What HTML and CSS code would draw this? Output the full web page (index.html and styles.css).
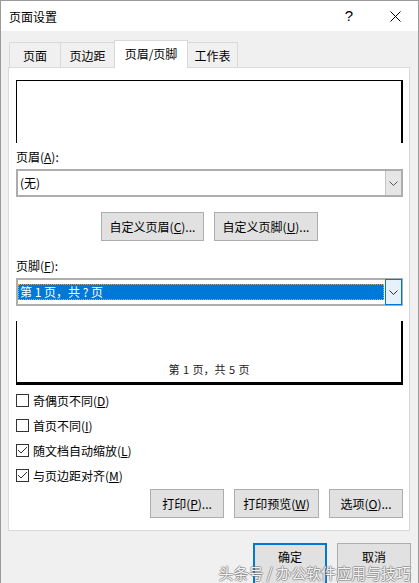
FILE: index.html
```html
<!DOCTYPE html>
<html lang="zh-CN">
<head>
<meta charset="utf-8">
<title>页面设置</title>
<link rel="stylesheet" href="styles.css">
</head>
<body>
<div class="window">
  <div class="titlebar">
    <span class="title">页面设置</span>
    <span class="caption-btn help">?</span>
    <span class="caption-btn close">
      <svg width="11" height="11" viewBox="0 0 11 11"><path d="M0.5 0.5 L10.5 10.5 M10.5 0.5 L0.5 10.5" stroke="#000" stroke-width="1" fill="none"/></svg>
    </span>
  </div>
  <div class="main">
    <div class="tabs">
      <div class="tab tab-page">页面</div>
      <div class="tab tab-margin">页边距</div>
      <div class="tab tab-active">页眉/页脚</div>
      <div class="tab tab-sheet">工作表</div>
    </div>
    <div class="panel">
      <div class="preview preview-top"></div>
      <div class="label">页眉(<u>A</u>):</div>
      <div class="combo">
        <span class="combo-value">(无)</span>
        <span class="combo-btn">
          <svg width="9" height="5" viewBox="0 0 9 5"><polyline points="0.5,0.5 4.5,4.5 8.5,0.5" fill="none" stroke="#555" stroke-width="1"/></svg>
        </span>
      </div>
      <div class="custom-row">
        <button class="btn btn-custom-h">自定义页眉(<u>C</u>)...</button>
        <button class="btn btn-custom-f">自定义页脚(<u>U</u>)...</button>
      </div>
      <div class="label label-footer">页脚(<u>F</u>):</div>
      <div class="combo combo-focused">
        <span class="combo-sel">第 1 页，共 ? 页</span>
        <span class="combo-btn combo-btn-focused">
          <svg width="9" height="5" viewBox="0 0 9 5"><polyline points="0.5,0.5 4.5,4.5 8.5,0.5" fill="none" stroke="#333" stroke-width="1"/></svg>
        </span>
      </div>
      <div class="preview preview-bottom"><span>第 1 页，共 5 页</span></div>
      <div class="checks">
        <div class="check-row"><span class="checkbox"></span><span>奇偶页不同(<u>D</u>)</span></div>
        <div class="check-row"><span class="checkbox"></span><span>首页不同(<u>I</u>)</span></div>
        <div class="check-row"><span class="checkbox"><svg width="11" height="11" viewBox="0 0 11 11"><polyline points="1,5 4,8 10,2" fill="none" stroke="#333" stroke-width="1"/></svg></span><span>随文档自动缩放(<u>L</u>)</span></div>
        <div class="check-row"><span class="checkbox"><svg width="11" height="11" viewBox="0 0 11 11"><polyline points="1,5 4,8 10,2" fill="none" stroke="#333" stroke-width="1"/></svg></span><span>与页边距对齐(<u>M</u>)</span></div>
      </div>
      <div class="print-row">
        <button class="btn btn-print">打印(<u>P</u>)...</button>
        <button class="btn btn-preview">打印预览(<u>W</u>)</button>
        <button class="btn btn-options">选项(<u>O</u>)...</button>
      </div>
    </div>
    <div class="dialog-buttons">
      <button class="btn dlg-btn dlg-ok">确定</button>
      <button class="btn dlg-btn dlg-cancel">取消</button>
    </div>
  </div>
  <div class="watermark">头条号 / 办公软件应用与技巧</div>
</div>
</body>
</html>
```

FILE: styles.css
```css
html, body {
  margin: 0;
  padding: 0;
  height: 100%;
  overflow: hidden;
}

body {
  background: #f0f0f0;
  font-family: "Noto Sans CJK SC", "Microsoft YaHei", sans-serif;
  font-size: 12px;
  color: #000;
}

.window {
  position: relative;
  box-sizing: border-box;
  width: 419px;
  height: 583px;
  border: 1px solid #9a9a9a;
  border-bottom: none;
  background: #f0f0f0;
  overflow: hidden;
}

.titlebar {
  height: 30px;
  background: #fff;
  display: flex;
  align-items: center;
  padding-left: 8px;
}

.title {
  flex: 1;
  line-height: 18px;
  margin-top: 1px;
}

.caption-btn {
  width: 46px;
  height: 30px;
  display: flex;
  align-items: center;
  justify-content: center;
}

.help {
  font-family: "Liberation Sans", sans-serif;
  font-size: 15px;
  line-height: 16px;
  color: #000;
}

.close svg {
  display: block;
  margin-top: 1px;
}

.main {
  padding: 9px 8px 0 7px;
}

.tabs {
  display: flex;
  align-items: flex-end;
  height: 27px;
  padding-left: 1px;
}

.tab {
  box-sizing: border-box;
  height: 25px;
  border-top: 1px solid #d9d9d9;
  border-left: 1px solid #d9d9d9;
  background: #f0f0f0;
  text-align: center;
  padding-top: 4px;
  line-height: 17px;
  white-space: nowrap;
}

.tab-page { width: 51px; }
.tab-margin { width: 54px; }

.tab-active {
  position: relative;
  z-index: 1;
  width: 74px;
  height: 28px;
  margin-bottom: -1px;
  background: #fff;
  border-right: 1px solid #d9d9d9;
}

.tab-sheet {
  width: 50px;
  border-left: none;
  border-right: 1px solid #d9d9d9;
}

.panel {
  box-sizing: border-box;
  height: 464px;
  border: 1px solid #d9d9d9;
  background: #fff;
  padding: 12px 6px 0 7px;
}

.preview {
  box-sizing: border-box;
  border-left: 1px solid #000;
  border-right: 2px solid #000;
}

.preview-top {
  height: 63px;
  border-top: 1px solid #000;
}

.preview-bottom {
  height: 64px;
  margin-top: 15px;
  border-bottom: 3px solid #000;
  display: flex;
  align-items: flex-end;
  justify-content: center;
  padding-bottom: 6px;
  font-size: 11px;
  line-height: 14px;
  color: #222;
  word-spacing: 1px;
}

.label {
  margin-top: 5px;
  line-height: 18px;
}

.label-footer {
  margin-top: 16px;
}

.combo {
  box-sizing: border-box;
  height: 28px;
  margin-top: 3px;
  border: 2px solid #adadad;
  background: #fff;
  display: flex;
}

.combo-value {
  flex: 1;
  padding-left: 2px;
  line-height: 24px;
}

.combo-btn {
  box-sizing: border-box;
  width: 16px;
  background: #e6e6e6;
  border-left: 1px solid #c4c4c4;
  display: flex;
  align-items: center;
  justify-content: center;
}

.combo-btn svg {
  display: block;
  margin-top: 1px;
}

.combo-sel {
  flex: 1;
  box-sizing: border-box;
  height: 16px;
  align-self: center;
  margin-right: 1px;
  background: #0078d7;
  color: #fff;
  border: 1px dotted #f0a040;
  padding-left: 1px;
  line-height: 14px;
}

.combo-btn-focused {
  width: 17px;
  margin: -1px -1px -1px 0;
  background: #e5f1fb;
  border: 1px solid #0078d7;
}

.btn {
  box-sizing: border-box;
  height: 29px;
  margin: 0;
  padding: 0;
  border: 1px solid #adadad;
  background: #e1e1e1;
  font: inherit;
  color: #000;
  line-height: 27px;
  text-align: center;
  white-space: nowrap;
}

.custom-row {
  display: flex;
  justify-content: center;
  gap: 10px;
  margin-top: 15px;
}

.btn-custom-h { width: 103px; }
.btn-custom-f { width: 104px; }

.checks {
  margin-top: 3px;
}

.check-row {
  display: flex;
  align-items: center;
  height: 25px;
  line-height: 18px;
}

.checkbox {
  box-sizing: border-box;
  width: 13px;
  height: 13px;
  border: 1px solid #333;
  background: #fff;
  margin-right: 4px;
  flex: none;
}

.checkbox svg {
  display: block;
}

.print-row {
  display: flex;
  justify-content: flex-end;
  gap: 10px;
  margin-top: 1px;
}

.btn-print { width: 74px; }
.btn-preview { width: 85px; }
.btn-options { width: 74px; }

.dialog-buttons {
  display: flex;
  justify-content: flex-end;
  gap: 10px;
  margin-top: 12px;
  margin-right: -1px;
}

.dlg-btn {
  width: 74px;
  height: 44px;
  line-height: 14px;
  padding-top: 6px;
  display: flex;
  justify-content: center;
  align-items: flex-start;
}

.dlg-ok {
  border: 2px solid #0078d7;
  padding-top: 5px;
}

.watermark {
  position: absolute;
  top: 564px;
  right: 7px;
  font-size: 15px;
  line-height: 15px;
  color: rgba(255, 255, 255, 0.92);
  white-space: nowrap;
  text-shadow: 1px 0 0 rgba(110, 110, 110, 0.55), -1px 0 0 rgba(110, 110, 110, 0.55), 0 1px 0 rgba(110, 110, 110, 0.55), 0 -1px 0 rgba(110, 110, 110, 0.55);
}
```
